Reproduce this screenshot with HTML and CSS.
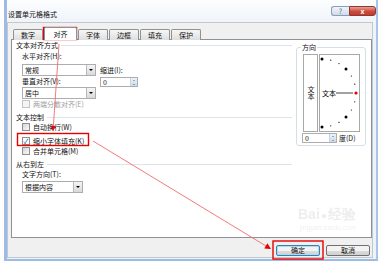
FILE: index.html
```html
<!DOCTYPE html>
<html>
    <head>
        <meta charset="utf-8">
        <title>设置单元格格式</title>
        <link rel="stylesheet" href="styles.css">
    </head>
    <body>
        <div class="window">
            <div class="frame">
                <div class="titlebar">
                    <span class="title">设置单元格格式</span>
                    <div class="caption">
                        <span class="cap-help">?</span>
                        <span class="cap-close">x</span>
                    </div>
                </div><!-- end titlebar -->

                <div class="client">
                    <ul class="tabs">
                        <li>数字</li>
                        <li class="active">对齐</li>
                        <li>字体</li>
                        <li>边框</li>
                        <li>填充</li>
                        <li>保护</li>
                    </ul>

                    <div class="panel">
                        <div class="left">
                            <div class="group-title">文本对齐方式</div>
                            <div class="indent align-area">
                                <div class="col-a">
                                    <div class="label first">水平对齐(H):</div>
                                    <div class="select sel-h">常规<span class="drop"></span></div>
                                    <div class="label">垂直对齐(V):</div>
                                    <div class="select sel-v">居中<span class="drop"></span></div>
                                </div>
                                <div class="col-b">
                                    <div class="label">缩进(I):</div>
                                    <div class="spin">0<span class="spin-btn"><i class="up"></i><i class="down"></i></span></div>
                                </div>
                            </div>
                            <div class="indent check-row disabled"><span class="check"></span>两端分散对齐(E)</div>

                            <div class="group-title gap">文本控制</div>
                            <div class="indent check-row"><span class="check"></span>自动换行(W)</div>
                            <div class="indent check-row shrink"><span class="check on">✓</span>缩小字体填充(K)</div>
                            <div class="indent check-row"><span class="check"></span>合并单元格(M)</div>

                            <div class="group-title gap">从右到左</div>
                            <div class="indent">
                                <div class="label">文字方向(T):</div>
                                <div class="select sel-dir">根据内容<span class="drop"></span></div>
                            </div>
                        </div><!-- end left -->

                        <fieldset class="orient">
                            <legend>方向</legend>
                            <div class="orient-boxes">
                                <div class="vert-box"><span class="vert-text">文本</span></div>
                                <div class="dial-box">
                                    <svg width="39" height="76" viewBox="0 0 39 76">
                                        <g fill="#000">
                                            <circle cx="2" cy="4" r="1.5"/>
                                            <circle cx="10.8" cy="5.2" r="0.6"/>
                                            <circle cx="19" cy="8.6" r="0.6"/>
                                            <circle cx="26" cy="14" r="1.5"/>
                                            <circle cx="31.4" cy="21" r="0.6"/>
                                            <circle cx="34.8" cy="29.2" r="0.6"/>
                                            <circle cx="34.8" cy="46.8" r="0.6"/>
                                            <circle cx="31.4" cy="55" r="0.6"/>
                                            <circle cx="26" cy="62" r="1.5"/>
                                            <circle cx="19" cy="67.4" r="0.6"/>
                                            <circle cx="10.8" cy="70.8" r="0.6"/>
                                            <circle cx="2" cy="72" r="1.5"/>
                                        </g>
                                        <text x="2" y="40.5" font-size="7" font-family="Noto Sans CJK SC, sans-serif" fill="#000">文本</text>
                                        <line x1="16" y1="38" x2="33" y2="38" stroke="#444" stroke-width="1"/>
                                        <circle cx="36" cy="38" r="1.6" fill="#e00000"/>
                                    </svg>
                                </div>
                            </div>
                            <div class="deg-row">
                                <div class="spin deg">0<span class="spin-btn"><i class="up"></i><i class="down"></i></span></div>
                                <span>度(D)</span>
                            </div>
                        </fieldset>
                    </div><!-- end panel -->

                    <div class="buttons">
                        <span class="btn default">确定</span>
                        <span class="btn">取消</span>
                    </div>
                </div><!-- end client -->
            </div><!-- end frame -->

            <div class="watermark">Bai<span class="paw">●</span>经验<small>jingyan.baidu.com</small></div>

            <svg class="marks" width="388" height="261" viewBox="0 0 388 261">
                <g fill="none" stroke="#e60000" stroke-width="1.4">
                    <rect x="43.5" y="27.5" width="33" height="12"/>
                    <rect x="17.5" y="133.5" width="71" height="12"/>
                    <rect x="273" y="241" width="50" height="18"/>
                </g>
                <g stroke="#f26b6b" stroke-width="0.9">
                    <line x1="59" y1="44" x2="53.3" y2="127"/>
                    <line x1="93" y1="141" x2="266" y2="246"/>
                </g>
                <g fill="#e60000">
                    <polygon points="53,131 55.8,126.2 50.8,125.8"/>
                    <polygon points="271,249 264.3,248.5 267.4,243.3"/>
                </g>
            </svg>
        </div><!-- end window -->
    </body>
</html>
```

FILE: styles.css
```css
*{
    margin: 0;
    padding: 0;
    box-sizing: border-box;
}

body{
    background-color: #fff;
    font-family: "Noto Sans CJK SC", "DejaVu Sans", sans-serif;
    font-size: 7px;
    color: #111;
}

.window{
    position: relative;
    width: 388px;
    height: 261px;
    padding-left: 4px;
    overflow: hidden;
}

.frame{
    display: flex;
    flex-direction: column;
    width: 374px;
    height: 261px;
    border-left: 3px solid #9cbce4;
    border-right: 2px solid #a9c4e6;
    border-bottom: 2px solid #9cbce4;
    background: linear-gradient(#fdfeff, #eef3f9 24px);
}

/* title bar */
.titlebar{
    display: flex;
    justify-content: space-between;
    height: 22px;
    flex-shrink: 0;
}

.title{
    padding: 9px 0 0 1px;
    line-height: 10px;
}

.caption{
    display: flex;
    height: 10px;
    margin-top: 6px;
}

.cap-help, .cap-close{
    line-height: 8px;
    text-align: center;
    font-size: 7px;
}

.cap-help{
    width: 18px;
    border: 1px solid #8c9db5;
    border-right: none;
    border-radius: 3px 0 0 3px;
    background: linear-gradient(#f1f5fa, #cfdbe9);
    color: #5c708c;
}

.cap-close{
    width: 27px;
    border: 1px solid #8a3a33;
    border-radius: 0 3px 3px 0;
    background: linear-gradient(#e9a196, #cb4a3d 55%, #c23a2d);
    color: #fff;
    font-weight: bold;
}

/* client area */
.client{
    display: flex;
    flex-direction: column;
    flex: 1;
    margin: 0 3px 1px 0;
    padding: 4px 0 0 3px;
    border: 1px solid #c3c8d0;
    background-color: #f0f0f0;
}

.tabs{
    display: flex;
    position: relative;
    z-index: 1;
    height: 13px;
    margin: 0 0 -1px 2px;
    list-style: none;
}

.tabs li{
    width: 30px;
    height: 11px;
    margin-top: 2px;
    margin-right: 1px;
    border: 1px solid #8e9196;
    border-bottom: none;
    border-radius: 2px 2px 0 0;
    background: linear-gradient(#f7f7f7, #dedede);
    text-align: center;
    line-height: 10px;
}

.tabs li.active{
    width: 33px;
    height: 13px;
    margin-top: 0;
    background: #fff;
    line-height: 12px;
}

.panel{
    display: flex;
    gap: 4px;
    height: 199px;
    padding: 0 5px 0 4px;
    border: 1px solid #8e9196;
    background-color: #fff;
}

.left{
    display: flex;
    flex-direction: column;
    width: 276px;
}

.group-title{
    display: flex;
    align-items: center;
    height: 10px;
    line-height: 10px;
}

.group-title::after{
    content: "";
    flex: 1;
    margin-left: 3px;
    border-top: 1px solid #dce3ea;
}

.group-title.gap{
    margin-top: 3px;
}

.indent{
    padding-left: 6px;
}

.label{
    height: 10px;
    line-height: 10px;
}

.label.first{
    margin-top: 1px;
}

.align-area{
    display: flex;
    gap: 4px;
}

.col-a{
    display: flex;
    flex-direction: column;
    width: 74px;
}

.col-b{
    display: flex;
    flex-direction: column;
    width: 38px;
    padding-top: 15px;
}

/* dropdowns */
.select{
    display: flex;
    align-items: center;
    justify-content: space-between;
    height: 12px;
    padding-left: 2px;
    border: 1px solid #abadb3;
    background-color: #fff;
    line-height: 10px;
}

.sel-h{
    margin-top: 3px;
}

.sel-v{
    margin-top: 1px;
}

.sel-dir{
    width: 61px;
    margin-top: 2px;
}

.drop{
    display: flex;
    align-items: center;
    justify-content: center;
    width: 9px;
    height: 10px;
    border-left: 1px solid #b8b8b8;
    background: linear-gradient(#f5f5f5, #d9d9d9);
}

.drop::after{
    content: "";
    border-left: 2px solid transparent;
    border-right: 2px solid transparent;
    border-top: 2px solid #000;
}

/* spinners */
.spin{
    display: flex;
    align-items: center;
    justify-content: space-between;
    height: 10px;
    margin-top: 2px;
    padding-left: 2px;
    border: 1px solid #abadb3;
    background-color: #fff;
    line-height: 8px;
}

.spin-btn{
    display: flex;
    flex-direction: column;
    align-items: center;
    justify-content: space-around;
    width: 7px;
    height: 8px;
    border-left: 1px solid #c5d3e4;
    background: linear-gradient(#eef3f9, #cbd9ea);
}

.spin-btn i{
    border-left: 1.5px solid transparent;
    border-right: 1.5px solid transparent;
}

.spin-btn .up{
    border-bottom: 1.5px solid #4d6185;
}

.spin-btn .down{
    border-top: 1.5px solid #4d6185;
}

/* checkboxes */
.check-row{
    display: flex;
    align-items: center;
    gap: 3px;
    height: 10px;
    line-height: 10px;
}

.check-row.shrink{
    height: 11px;
    margin: 3px 0 0;
}

.check{
    width: 8px;
    height: 8px;
    border: 1px solid #8f8f8f;
    background: linear-gradient(135deg, #d6d6d6, #fbfbfb);
    color: #1f3f8f;
    font-size: 7px;
    line-height: 6px;
    text-align: center;
}

.check.on{
    background: #fff;
}

.disabled{
    color: #a0a0a0;
}

.disabled .check{
    border-color: #c4c4c4;
    background: #f4f4f4;
}

/* orientation */
.orient{
    width: 70px;
    height: 104px;
    margin-top: 2px;
    padding: 2px 0 0 6px;
    border: 1px solid #d5dfe5;
    border-radius: 3px;
}

.orient legend{
    padding: 0 1px;
    margin-left: -2px;
    line-height: 10px;
}

.orient-boxes{
    display: flex;
    gap: 1px;
}

.vert-box, .dial-box{
    height: 78px;
    border: 1px solid #a8a8a8;
}

.vert-box{
    display: flex;
    align-items: center;
    justify-content: center;
    width: 15px;
}

.vert-text{
    writing-mode: vertical-rl;
    text-orientation: upright;
    line-height: 7px;
}

.dial-box{
    width: 41px;
}

.dial-box svg{
    display: block;
}

.deg-row{
    display: flex;
    align-items: center;
    gap: 2px;
    margin: 1px 0 0 -1px;
    line-height: 10px;
}

.spin.deg{
    width: 35px;
    margin-top: 0;
}

/* bottom buttons */
.buttons{
    display: flex;
    justify-content: flex-end;
    gap: 6px;
    padding: 7px 2px 0 0;
}

.btn{
    width: 44px;
    height: 11px;
    border: 1px solid #707070;
    border-radius: 2px;
    background: linear-gradient(#f3f3f3 50%, #dedede 50%, #d0d0d0);
    text-align: center;
    line-height: 9px;
}

.btn.default{
    border-color: #3c7fb1;
    box-shadow: inset 0 0 0 1px #a9dcf5;
}

/* overlays */
.watermark{
    position: absolute;
    left: 298px;
    top: 206px;
    color: rgba(140, 140, 140, 0.16);
    font-family: "Liberation Sans", sans-serif;
    font-size: 14px;
    font-weight: bold;
    line-height: 16px;
}

.watermark .paw{
    font-size: 10px;
    margin: 0 1px;
}

.watermark small{
    display: block;
    font-size: 7px;
    line-height: 8px;
    font-weight: normal;
    text-align: right;
}

.marks{
    position: absolute;
    left: 0;
    top: 0;
    pointer-events: none;
}
```
